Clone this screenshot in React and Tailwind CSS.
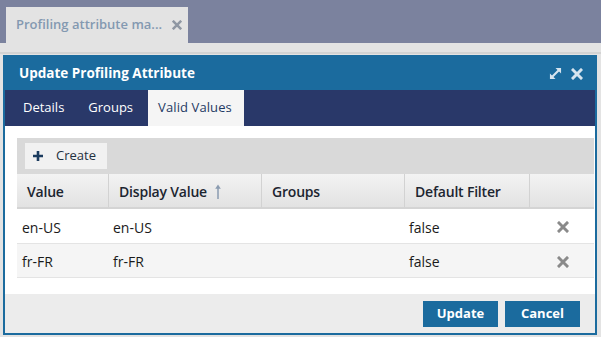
import { useState } from 'react';

const rows = [
  { value: 'en-US', display: 'en-US', groups: '', filter: 'false' },
  { value: 'fr-FR', display: 'fr-FR', groups: '', filter: 'false' },
];

function TimesIcon({ className }) {
  return (
    <svg viewBox="0 0 12 12" className={className}>
      <path d="M2 2 L10 10 M10 2 L2 10" stroke="currentColor" strokeWidth="3" strokeLinecap="square" fill="none" />
    </svg>
  );
}

function ExpandIcon({ className }) {
  return (
    <svg viewBox="0 0 14 14" className={className}>
      <path d="M3.5 10.5 L10.5 3.5" stroke="currentColor" strokeWidth="2.2" fill="none" />
      <path d="M7 1 L13 1 L13 7 Z" fill="currentColor" />
      <path d="M1 7 L1 13 L7 13 Z" fill="currentColor" />
    </svg>
  );
}

export default function App() {
  const [tab, setTab] = useState('Valid Values');
  const tabs = ['Details', 'Groups', 'Valid Values'];

  return (
    <div className="w-[601px] h-[337px] overflow-hidden bg-[#e3e3e3] font-['Open_Sans',sans-serif]">
      {/* Top tab strip */}
      <div className="h-[43px] bg-[#7b829e] pt-[7px] pl-[6px]">
        <div className="w-[182px] h-[36px] bg-[#e3e3e3] flex items-center pl-[10px] gap-[10px] text-[#8399b1]">
          <span className="text-[13px] font-semibold">Profiling attribute ma...</span>
          <TimesIcon className="w-[10px] h-[10px] text-[#8f97a3]" />
        </div>
      </div>

      {/* Page area */}
      <div className="h-[9px]" />
      <div className="h-[2px] bg-[#d3d3d3]" />
      <div className="h-px" />

      {/* Dialog */}
      <div className="ml-[3px] w-[594px] h-[280px] border-2 border-[#1b6b9e] bg-white flex flex-col">
        <div className="h-[33px] bg-[#1b6b9e] flex items-center justify-between pl-[14px] pr-[12px]">
          <span className="text-white text-[13.5px] font-bold">Update Profiling Attribute</span>
          <div className="flex items-center gap-[9px] text-[#d6e4ef]">
            <ExpandIcon className="w-[13px] h-[13px]" />
            <TimesIcon className="w-[12px] h-[12px]" />
          </div>
        </div>

        <div className="h-[36px] bg-[#293869] flex pl-[6px]">
          {tabs.map((t) => (
            <button
              key={t}
              onClick={() => setTab(t)}
              className={
                t === tab
                  ? 'ml-[3px] pl-[10px] pr-[12px] h-full bg-[#f5f5f5] text-[#1f3a64] text-[13px] tracking-[0.1px]'
                  : 'px-[12px] h-full text-white text-[13px]'
              }
            >
              {t}
            </button>
          ))}
        </div>

        <div className="h-[168px] pt-[12px] pl-[12px] pr-px">
          {/* Toolbar */}
          <div className="h-[36px] bg-[#d9d9d9] flex items-center pl-[8px]">
            <button className="h-[26px] w-[82px] bg-[#f1f1f1] flex items-center gap-[13px] pl-[8px] text-[#1f3040] text-[13px]">
              <svg viewBox="0 0 10 10" className="w-[10px] h-[10px]">
                <path d="M5 0 V10 M0 5 H10" stroke="#1b3b5e" strokeWidth="2.6" fill="none" />
              </svg>
              Create
            </button>
          </div>

          {/* Grid */}
          <div className="grid grid-cols-[91px_153px_143px_125px_65px] text-[14px] text-[#1a1a1a]">
            {['Value', 'Display Value', 'Groups', 'Default Filter', ''].map((h, i) => (
              <div
                key={i}
                className={
                  'h-[35px] flex items-center pl-[10px] pt-[2px] gap-[8px] bg-gradient-to-b from-[#f3f3f3] to-[#e2e2e2] border-b-2 border-[#d4d4d4] ' +
                  (i > 0 ? 'border-l border-l-[#d2d2d2]' : '')
                }
              >
                <span className="text-[#1c2530] font-semibold tracking-[-0.2px]">{h}</span>
                {h === 'Display Value' && (
                  <svg viewBox="0 0 6 16" className="w-[6px] h-[15px]">
                    <path d="M3 2 V16" stroke="#8a9bb0" strokeWidth="1.6" fill="none" />
                    <path d="M0 5 L3 0.5 L6 5 Z" fill="#8a9bb0" />
                  </svg>
                )}
              </div>
            ))}
            {rows.map((r, idx) => {
              const bg = idx % 2 === 0 ? 'bg-white' : 'bg-[#f5f5f5]';
              const h = idx === 0 ? 'h-[35px]' : 'h-[34px]';
              return [r.value, r.display, r.groups, r.filter].map((c, i) => (
                <div key={idx + '-' + i} className={`${h} ${bg} flex items-center pl-[5px] pt-[2px] border-b border-[#e4e4e4]`}>
                  {c}
                </div>
              )).concat(
                <div key={idx + '-x'} className={`${h} ${bg} flex items-center justify-center pl-[2px] pt-[2px] border-b border-[#e4e4e4]`}>
                  <TimesIcon className="w-[12px] h-[12px] text-[#8a8a8a]" />
                </div>
              );
            })}
          </div>
        </div>

        <div className="h-[39px] bg-[#ececec] flex items-center justify-end gap-[7px] pr-[15px]">
          <button className="w-[75px] h-[26px] bg-[#1b6b9e] text-white text-[13px] font-bold">Update</button>
          <button className="w-[75px] h-[26px] bg-[#1b6b9e] text-white text-[13px] font-bold">Cancel</button>
        </div>
      </div>
    </div>
  );
}
